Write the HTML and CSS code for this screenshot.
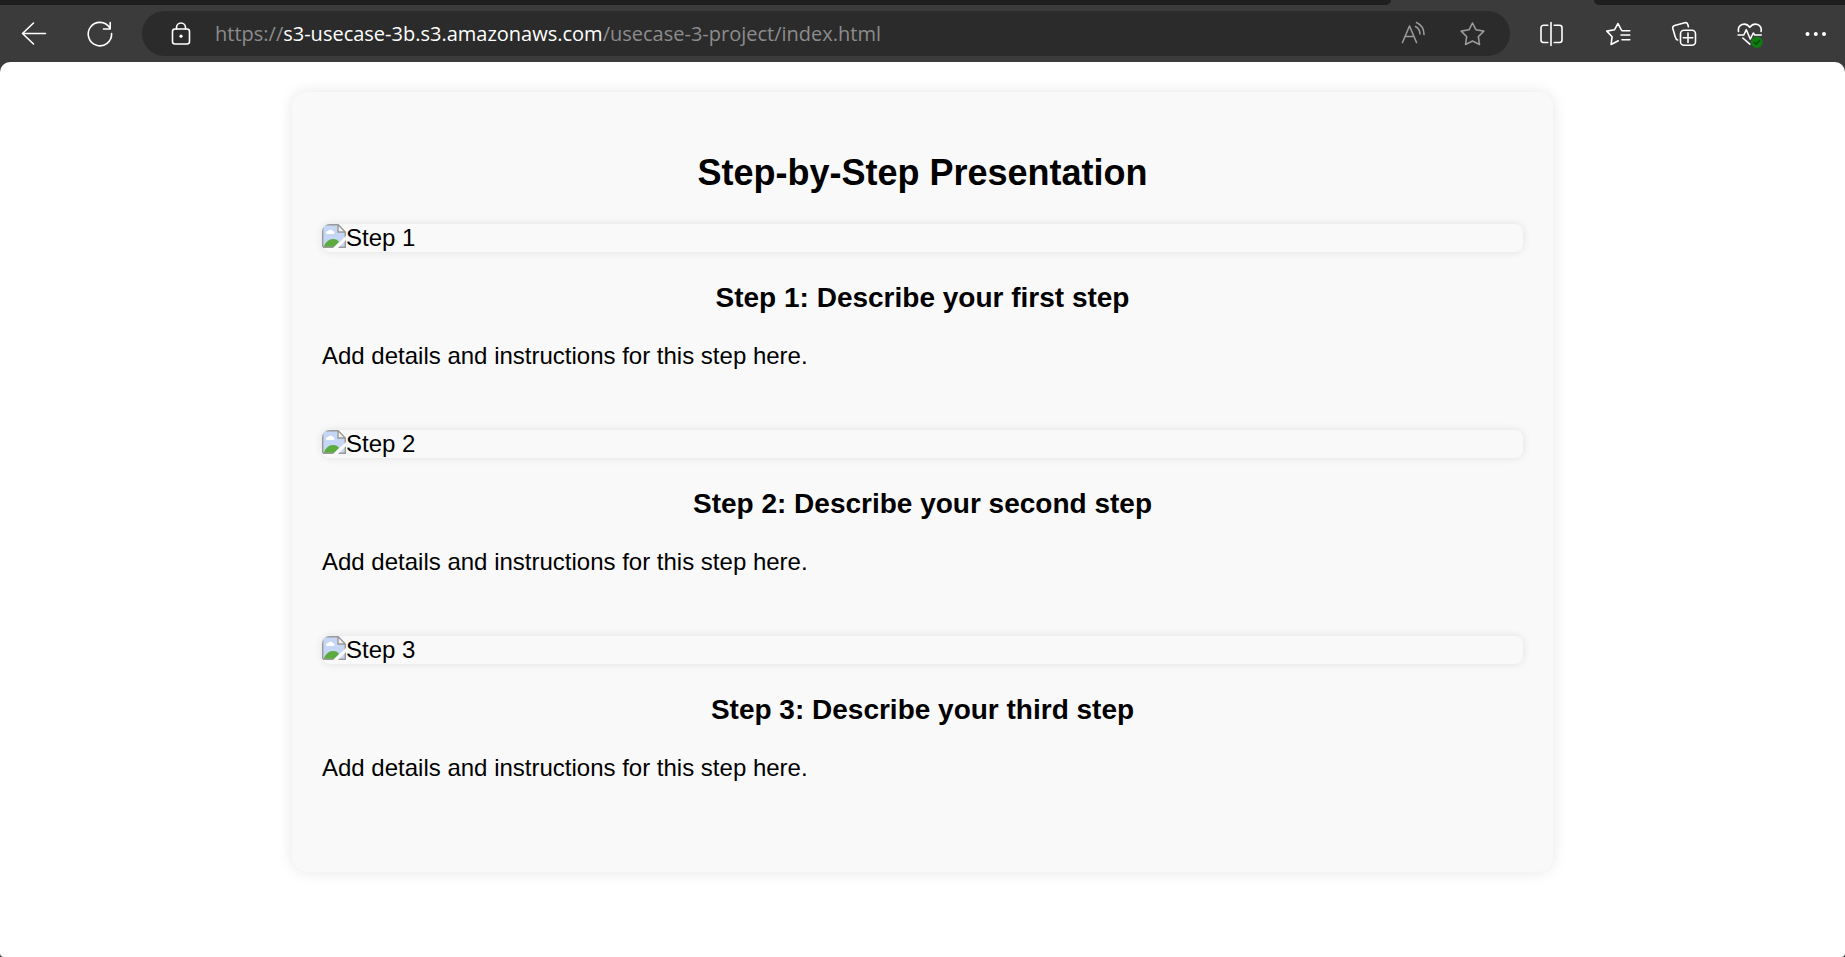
FILE: index.html
```html
<!DOCTYPE html>
<html lang="en">
<head>
<meta charset="utf-8">
<title>Step-by-Step Presentation</title>
<link rel="stylesheet" href="styles.css">
</head>
<body>
<svg class="defs" aria-hidden="true">
  <symbol id="broken" viewBox="0 0 24 24">
    <path d="M1 1h15l7 7v15H1z" fill="#c6d6f5"/>
    <path d="M4 9a2 2 0 0 1 2-2 3 3 0 0 1 5 0 1.500 1.500 0 0 1 0 3H5z" fill="#fff"/>
    <path d="M2 23c0-3 4-8 9-8 3 0 5 1 6 3l-5 5z" fill="#5bab3d"/>
    <path d="M16 1v7h7z" fill="#f4f4f4"/>
    <path d="M16 1v7h7M.7 23V.7h15.5L23.3 8v15.3H1" fill="none" stroke="#999" stroke-width="1.4"/>
    <path d="M11 24L24 12v4l-8 8z" fill="#f9f9f9"/>
  </symbol>
</svg>
<header class="browser">
  <div class="tabs"><span class="tab-left"></span><span class="tab-right"></span></div>
  <div class="toolbar">
    <button class="tool" aria-label="Back"><svg class="icon" viewBox="0 0 28 28"><path d="M25.500 13.500H2.500M13.500 3L2.500 13.500L13.500 24"/></svg></button>
    <button class="tool" aria-label="Refresh"><svg class="icon" viewBox="0 0 28 28"><path d="M25.600 13.500A11.700 11.700 0 1 1 23.600 7.500M24.200 2.500V9H17.500"/></svg></button>
    <div class="address">
      <button class="site" aria-label="View site information"><svg class="icon" viewBox="0 0 28 28"><rect x="5.500" y="9" width="17" height="15" rx="2.500"/><path d="M9.500 9V7.500a4.500 4.500 0 0 1 9 0V9"/><circle class="solid" cx="14" cy="16.200" r="1.600"/></svg></button>
      <div class="url" role="textbox" aria-label="Address" contenteditable="true" spellcheck="false">https://<span class="host">s3-usecase-3b.s3.amazonaws.com</span>/usecase-3-project/index.html</div>
      <button class="page-action" aria-label="Read aloud"><svg class="icon" viewBox="0 0 28 28"><path d="M3.500 22.500L10.500 6L17.500 22.500M6 16.500H15M16.500 6.500Q21 9 21 14M17.500 2.500Q25 6 25 14.500"/></svg></button>
      <button class="page-action" aria-label="Add to favorites"><svg class="icon" viewBox="0 0 28 28"><path d="M14.500 3L18 9.800L25.800 11.100L20.300 16.700L21.500 24.500L14.500 21L7.500 24.500L8.700 16.700L3.200 11.100L11 9.800Z"/></svg></button>
    </div>
    <button class="tool" aria-label="Split screen"><svg class="icon" viewBox="0 0 28 28"><path d="M14 2.500V25.500M10.800 5.300H6.500a2.500 2.500 0 0 0-2.500 2.500V20a2.500 2.500 0 0 0 2.500 2.500H10.800M17.200 5.300H22.500a2.500 2.500 0 0 1 2.500 2.500V20a2.500 2.500 0 0 1-2.500 2.500H17.200"/></svg></button>
    <button class="tool" aria-label="Favorites"><svg class="icon" viewBox="0 0 28 28"><path d="M18.300 9.800L15 3.500L11.400 9.800L3.800 11.100L9.100 16.700L8.100 24.500L15.300 20.800M19 10.700H26.800M18 15H26.800M19 19.700H26.800"/></svg></button>
    <button class="tool" aria-label="Collections"><svg class="icon" viewBox="0 0 28 28"><rect x="11.500" y="10.200" width="15" height="15" rx="3.500"/><path d="M19 13V22.500M14.300 17.700H23.800M19.400 6.700L18.800 4.500Q18.100 2.200 15.800 2.700L5.600 5.500Q3.300 6.300 3.800 8.500L6.300 17Q7 19.500 8.600 20"/></svg></button>
    <button class="tool" aria-label="Browser essentials"><svg class="icon" viewBox="0 0 28 28"><path d="M3.500 11.500C2.300 4.500 10.300 1.500 14.800 7.300C19.300 1.500 27.300 4.500 26.100 11.500M3.100 15H8.800L11.300 9.700L15.300 19L18.300 13L19.800 15H26.300M7.800 18L14.800 24.200"/><circle class="badge" cx="21.800" cy="22.200" r="5.800"/><path class="check" d="M19.300 22.500L21.100 24.200L24.600 20.500"/></svg></button>
    <button class="tool" aria-label="Settings and more"><svg class="icon" viewBox="0 0 28 28"><g class="solid"><circle cx="6.500" cy="14" r="2"/><circle cx="14.800" cy="14" r="2"/><circle cx="23" cy="14" r="2"/></g></svg></button>
  </div>
</header>
<main class="page">
  <div class="container">
    <h1>Step-by-Step Presentation</h1>
    <section class="step">
      <div class="picture"><svg class="broken" aria-hidden="true"><use href="#broken"/></svg>Step 1</div>
      <h2>Step 1: Describe your first step</h2>
      <p>Add details and instructions for this step here.</p>
    </section>
    <section class="step">
      <div class="picture"><svg class="broken" aria-hidden="true"><use href="#broken"/></svg>Step 2</div>
      <h2>Step 2: Describe your second step</h2>
      <p>Add details and instructions for this step here.</p>
    </section>
    <section class="step">
      <div class="picture"><svg class="broken" aria-hidden="true"><use href="#broken"/></svg>Step 3</div>
      <h2>Step 3: Describe your third step</h2>
      <p>Add details and instructions for this step here.</p>
    </section>
  </div>
</main>
</body>
</html>
```
FILE: styles.css
```css
* { box-sizing: border-box; }
body {
  margin: 0;
  min-height: 100vh;
  display: flex;
  flex-direction: column;
  background: #3b3b3b;
  color: #000;
  font: 24px/28px "Liberation Sans", Arial, sans-serif;
}
button { border: 0; padding: 0; background: none; color: inherit; }
.defs { display: none; }

.browser { color: #fff; }
.tabs { display: flex; justify-content: space-between; height: 5px; }
.tab-left, .tab-right { background: #1f1f1f; }
.tab-left { flex: 1; border-bottom-right-radius: 5px; }
.tab-right { width: 251px; margin-left: 203px; border-bottom-left-radius: 5px; }
.toolbar { display: flex; align-items: center; gap: 8px; height: 57px; padding: 0 1px 0 5px; }
.tool { display: flex; align-items: center; justify-content: center; width: 58px; height: 44px; }
.icon {
  width: 28px;
  height: 28px;
  overflow: visible;
  fill: none;
  stroke: currentColor;
  stroke-width: 1.6;
  stroke-linecap: round;
  stroke-linejoin: round;
}
.solid { fill: currentColor; stroke: none; }
.badge { fill: #107c10; stroke: none; }
.check { stroke: #0a4d0a; }
.address {
  flex: 1;
  min-width: 0;
  display: flex;
  align-items: center;
  height: 45px;
  margin: 0 4px 0 5px;
  padding: 0 24px 0 25px;
  border-radius: 23px;
  background: #2b2b2b;
}
.site, .page-action { display: flex; }
.page-action { color: #9a9a9a; margin-left: 31px; }
.url {
  flex: 1;
  min-width: 0;
  margin-left: 20px;
  overflow: hidden;
  white-space: nowrap;
  color: #8c8c8c;
  font: 20px/28px "Open Sans", "Noto Sans", sans-serif;
}
.host { color: #fff; }

.page { flex: 1; padding: 30px; border-radius: 10px 10px 4px 4px; background: #fff; }
.container {
  max-width: 1261px;
  margin: 0 auto;
  padding: 30px;
  border-radius: 15px;
  background: #f9f9f9;
  box-shadow: 0 0 15px rgba(0, 0, 0, 0.1);
}
h1 { margin: 30px 0; font-size: 36px; line-height: 42px; text-align: center; }
h2 { margin: 30px 0 28px; font-size: 28px; line-height: 32px; text-align: center; }
p { margin: 0; }
.step { padding-bottom: 60px; }
.picture { display: flex; border-radius: 8px; box-shadow: 0 0 8px rgba(0, 0, 0, 0.1); }
.broken { width: 24px; height: 24px; border-top-left-radius: 8px; }
```
